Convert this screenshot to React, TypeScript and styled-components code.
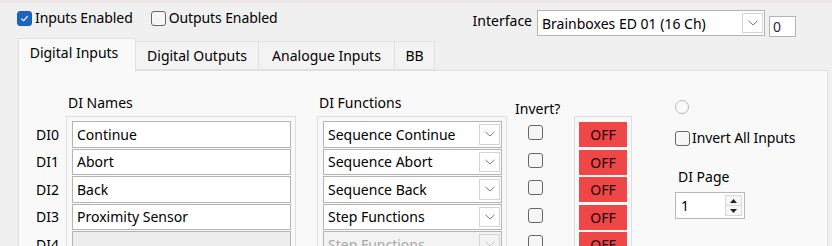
import styled, { createGlobalStyle } from "styled-components";

const GlobalStyle = createGlobalStyle`
  html, body {
    margin: 0;
    padding: 0;
    background: #f0f0f0;
  }
  body {
    width: 832px;
    height: 246px;
    overflow: hidden;
    font-family: "Noto Sans", "Open Sans", sans-serif;
    font-size: 14px;
    color: #000;
  }
`;

const Window = styled.div`
  width: 832px;
  height: 246px;
  border-top: 3px solid #eee8e8;
  box-sizing: border-box;
  overflow: hidden;
`;

const TopBar = styled.div`
  display: flex;
  align-items: flex-start;
  height: 35px;
  padding: 7px 36px 0 17px;
  box-sizing: border-box;
`;

const CheckLabel = styled.label<{ $gap?: number }>`
  display: flex;
  align-items: center;
  gap: 3px;
  margin-right: ${(p) => p.$gap ?? 0}px;
  line-height: 16px;
  white-space: nowrap;
  letter-spacing: -0.1px;
`;

const Box = styled.span<{ $checked?: boolean }>`
  width: 15px;
  height: 15px;
  box-sizing: border-box;
  border-radius: 3px;
  border: 1px solid ${(p) => (p.$checked ? "#1a5fb4" : "#666")};
  background: ${(p) => (p.$checked ? "#1c63ba" : "#f6f6f6")};
  display: inline-flex;
  align-items: center;
  justify-content: center;
  flex-shrink: 0;
`;

const InterfaceArea = styled.div`
  margin-left: auto;
  display: flex;
  align-items: flex-start;
`;

const FieldLabel = styled.span`
  margin-top: 2px;
  margin-right: 5px;
  line-height: 18px;
`;

const Combo = styled.div<{ $width: number; $height: number; $disabled?: boolean }>`
  width: ${(p) => p.$width}px;
  height: ${(p) => p.$height}px;
  box-sizing: border-box;
  border: 1px solid #b4b4b4;
  background: ${(p) => (p.$disabled ? "#f3f3f3" : "#fff")};
  color: ${(p) => (p.$disabled ? "#a8a8a8" : "#000")};
  display: flex;
  align-items: center;
  padding-left: 4px;
  padding-right: 1px;
  white-space: nowrap;
`;

const ComboText = styled.span`
  flex: 1;
  overflow: hidden;
`;

const DropButton = styled.span<{ $disabled?: boolean }>`
  width: 21px;
  height: calc(100% - 4px);
  box-sizing: border-box;
  border: 1px solid #d4d4d4;
  background: ${(p) => (p.$disabled ? "#f3f3f3" : "#fff")};
  display: flex;
  align-items: center;
  justify-content: center;
`;

const SmallBox = styled.div`
  margin-top: 6px;
  margin-left: 4px;
  width: 27px;
  height: 21px;
  box-sizing: border-box;
  border: 1px solid #b4b4b4;
  background: #fff;
  padding-left: 3px;
  line-height: 19px;
  color: #1a2a4a;
`;

const TabStrip = styled.div`
  display: flex;
  align-items: flex-end;
  padding-left: 18px;
  height: 32px;
  position: relative;
  z-index: 1;
`;

const Tab = styled.div<{ $width: number; $active?: boolean }>`
  width: ${(p) => p.$width}px;
  height: ${(p) => (p.$active ? 33 : 29)}px;
  box-sizing: border-box;
  border: 1px solid #e0e0e0;
  border-bottom: ${(p) => (p.$active ? "none" : "1px solid #e0e0e0")};
  border-left: ${(p) => (p.$active ? "1px solid #e0e0e0" : "none")};
  background: ${(p) => (p.$active ? "#f9f9f9" : "#f3f3f3")};
  margin-bottom: ${(p) => (p.$active ? -1 : 0)}px;
  display: flex;
  justify-content: center;
  padding-top: 5px;
  padding-right: ${(p) => (p.$active ? 6 : 0)}px;
  line-height: 18px;
  white-space: nowrap;
`;

const Panel = styled.div`
  margin-left: 18px;
  width: 810px;
  height: 200px;
  box-sizing: border-box;
  border: 1px solid #e0e0e0;
  background: #f9f9f9;
  display: flex;
  align-items: flex-start;
  padding-left: 18px;
`;

const Column = styled.div<{ $width?: number; $ml?: number }>`
  display: flex;
  flex-direction: column;
  flex-shrink: 0;
  width: ${(p) => (p.$width ? `${p.$width}px` : "auto")};
  margin-left: ${(p) => p.$ml ?? 0}px;
`;

const Header = styled.div<{ $top: number }>`
  height: 45px;
  box-sizing: border-box;
  padding-top: ${(p) => p.$top}px;
  padding-left: 2px;
  line-height: 18px;
  white-space: nowrap;
`;

const Group = styled.div<{ $pt?: number; $pl?: number; $pr?: number }>`
  border: 1px solid #dedede;
  border-bottom: none;
  padding: ${(p) => p.$pt ?? 4}px ${(p) => p.$pr ?? 4}px 0 ${(p) => p.$pl ?? 5}px;
  display: flex;
  flex-direction: column;
`;

const Row = styled.div<{ $pt?: number }>`
  height: 27.5px;
  box-sizing: border-box;
  display: flex;
  align-items: flex-start;
  padding-top: ${(p) => p.$pt ?? 0}px;
`;

const LabelList = styled.div`
  display: flex;
  flex-direction: column;
  padding-top: 5px;
`;

const RowLabel = styled.div`
  height: 27.5px;
  display: flex;
  align-items: center;
  justify-content: flex-end;
  padding-right: 7px;
  line-height: 18px;
`;

const CheckList = styled.div`
  display: flex;
  flex-direction: column;
  padding: 9px 0 0 13px;
`;

const NameField = styled.div<{ $disabled?: boolean }>`
  width: 219px;
  height: 26.5px;
  box-sizing: border-box;
  border: 1px solid #b4b4b4;
  background: ${(p) => (p.$disabled ? "#ededed" : "#fff")};
  padding-left: 4px;
  display: flex;
  align-items: center;
`;

const OffButton = styled.div`
  width: 48px;
  height: 25px;
  background: #ef4747;
  color: #1a0000;
  display: flex;
  align-items: center;
  justify-content: center;
`;

const SideColumn = styled.div`
  display: flex;
  flex-direction: column;
  margin-left: 43px;
  padding-top: 29px;
`;

const Radio = styled.span`
  width: 14px;
  height: 14px;
  box-sizing: border-box;
  border-radius: 50%;
  border: 1px solid #b8b8b8;
  background: #fbfbfb;
  margin-left: 0;
`;

const SideCheck = styled(CheckLabel)`
  margin-top: 16px;
  gap: 2px;
`;

const PageLabel = styled.div`
  margin-top: 22px;
  margin-left: 3px;
  line-height: 18px;
`;

const Spinner = styled.div`
  margin-top: 6px;
  width: 70px;
  height: 27px;
  box-sizing: border-box;
  border: 1px solid #b8b8b8;
  background: #fff;
  display: flex;
  align-items: center;
  padding-left: 5px;
`;

const SpinText = styled.span`
  flex: 1;
`;

const SpinButtons = styled.div`
  width: 17px;
  height: 21px;
  margin-right: 2px;
  display: flex;
  flex-direction: column;
  border: 1px solid #d8d8d8;
  box-sizing: border-box;
`;

const SpinHalf = styled.div<{ $up?: boolean }>`
  flex: 1;
  display: flex;
  align-items: center;
  justify-content: center;
  border-bottom: ${(p) => (p.$up ? "1px solid #d8d8d8" : "none")};
  background: #f6f6f6;
`;

const Check = () => (
  <svg width="9" height="9" viewBox="0 0 10 10">
    <path d="M1.5 5.2 L4 7.5 L8.5 2.5" fill="none" stroke="#fff" strokeWidth="1.3" />
  </svg>
);

const Chevron = ({ color = "#7a7a7a" }: { color?: string }) => (
  <svg width="10" height="6" viewBox="0 0 10 6">
    <path d="M0.5 0.8 L5 5 L9.5 0.8" fill="none" stroke={color} strokeWidth="1" />
  </svg>
);

const Triangle = ({ up }: { up?: boolean }) => (
  <svg width="7" height="4" viewBox="0 0 7 4">
    <path d={up ? "M0 4 L3.5 0 L7 4 Z" : "M0 0 L3.5 4 L7 0 Z"} fill="#222" />
  </svg>
);

const inputs = [
  { name: "Continue", fn: "Sequence Continue" },
  { name: "Abort", fn: "Sequence Abort" },
  { name: "Back", fn: "Sequence Back" },
  { name: "Proximity Sensor", fn: "Step Functions" },
  { name: "", fn: "Step Functions", disabled: true },
  { name: "", fn: "Step Functions", disabled: true },
];

const tabs = [
  { label: "Digital Inputs", width: 118, active: true },
  { label: "Digital Outputs", width: 123 },
  { label: "Analogue Inputs", width: 136 },
  { label: "BB", width: 40 },
];

const App = () => {
  return (
    <Window>
      <GlobalStyle />
      <TopBar>
        <CheckLabel $gap={18}>
          <Box $checked>
            <Check />
          </Box>
          Inputs Enabled
        </CheckLabel>
        <CheckLabel>
          <Box />
          Outputs Enabled
        </CheckLabel>
        <InterfaceArea>
          <FieldLabel>Interface</FieldLabel>
          <Combo $width={228} $height={26}>
            <ComboText>Brainboxes ED 01 (16 Ch)</ComboText>
            <DropButton>
              <Chevron />
            </DropButton>
          </Combo>
          <SmallBox>0</SmallBox>
        </InterfaceArea>
      </TopBar>

      <TabStrip>
        {tabs.map((t) => (
          <Tab key={t.label} $width={t.width} $active={t.active}>
            {t.label}
          </Tab>
        ))}
      </TabStrip>

      <Panel>
        <Column $width={29}>
          <Header $top={0} />
          <LabelList>
            {inputs.map((_, i) => (
              <RowLabel key={i}>DI{i}</RowLabel>
            ))}
          </LabelList>
        </Column>

        <Column>
          <Header $top={23}>DI Names</Header>
          <Group>
            {inputs.map((row, i) => (
              <Row key={i}>
                <NameField $disabled={row.disabled}>{row.name}</NameField>
              </Row>
            ))}
          </Group>
        </Column>

        <Column $ml={21}>
          <Header $top={23}>DI Functions</Header>
          <Group>
            {inputs.map((row, i) => (
              <Row key={i}>
                <Combo $width={179} $height={26.5} $disabled={row.disabled}>
                  <ComboText>{row.fn}</ComboText>
                  <DropButton $disabled={row.disabled}>
                    <Chevron color={row.disabled ? "#c4c4c4" : "#7a7a7a"} />
                  </DropButton>
                </Combo>
              </Row>
            ))}
          </Group>
        </Column>

        <Column $width={59} $ml={8}>
          <Header $top={29} style={{ paddingLeft: 0 }}>
            Invert?
          </Header>
          <CheckList>
            {inputs.map((_, i) => (
              <Row key={i}>
                <Box />
              </Row>
            ))}
          </CheckList>
        </Column>

        <Column>
          <Header $top={0} />
          <Group $pt={5} $pl={4} $pr={4}>
            {inputs.map((_, i) => (
              <Row key={i}>
                <OffButton>OFF</OffButton>
              </Row>
            ))}
          </Group>
        </Column>

        <SideColumn>
          <Radio />
          <SideCheck>
            <Box />
            Invert All Inputs
          </SideCheck>
          <PageLabel>DI Page</PageLabel>
          <Spinner>
            <SpinText>1</SpinText>
            <SpinButtons>
              <SpinHalf $up>
                <Triangle up />
              </SpinHalf>
              <SpinHalf>
                <Triangle />
              </SpinHalf>
            </SpinButtons>
          </Spinner>
        </SideColumn>
      </Panel>
    </Window>
  );
};

export default App;
